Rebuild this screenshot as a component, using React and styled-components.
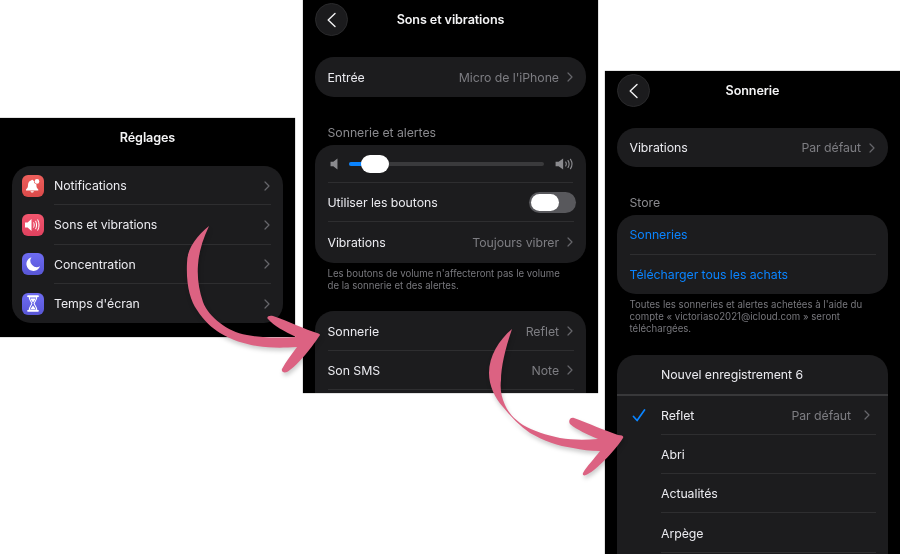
import React from 'react';
import styled, { createGlobalStyle } from 'styled-components';

const Global = createGlobalStyle`
    html, body {
        margin: 0;
        padding: 0;
        background: #fff;
    }
    body {
        font-family: Inter, "Noto Sans", "Liberation Sans", sans-serif;
    }
`;

const Canvas = styled.div`
    position: relative;
    width: 900px;
    height: 554px;
    overflow: hidden;
    background: #fff;
`;

// each screenshot sits freely on the white canvas
const Phone = styled.div`
    position: absolute;
    left: ${props => props.$x}px;
    top: ${props => props.$y}px;
    width: 295px;
    height: ${props => props.$h}px;
    box-sizing: border-box;
    padding: 3px 12px 0;
    overflow: hidden;
    background: #000;
    box-shadow: 0 0 1px #555;
    filter: blur(0.35px);
`;

const Header = styled.div`
    position: relative;
    display: flex;
    align-items: center;
    justify-content: center;
    height: 33px;
`;

const Title = styled.div`
    color: #f4f4f5;
    font-size: 12.6px;
    font-weight: 600;
    letter-spacing: -0.1px;
`;

const BackButton = styled.div`
    position: absolute;
    left: 0;
    top: 0;
    width: 33px;
    height: 33px;
    box-sizing: border-box;
    display: flex;
    align-items: center;
    justify-content: center;
    border-radius: 50%;
    background: #1b1b1d;
    border: 1px solid #2a2a2c;
`;

const Card = styled.div`
    margin-top: ${props => props.$mt || 0}px;
    border-radius: 19px;
    background: #1c1c1e;
    overflow: hidden;
`;

const Row = styled.div`
    display: flex;
    flex: ${props => props.$grow ? 1 : 'none'};
    align-items: center;
    box-sizing: border-box;
    height: ${props => props.$h || 39.3}px;
    margin: 0 12px 0 ${props => props.$inset ?? 12.5}px;
    padding-right: ${props => props.$pr || 0}px;
    gap: ${props => props.$gap || 8}px;
    box-shadow: ${props => props.$last ? 'none' : 'inset 0 -1px 0 #2e2e30'};
`;

const MarkedRow = styled.div`
    position: relative;
    display: flex;
    align-items: center;
`;

const Thick = styled.div`
    height: 1.5px;
    background: #38383a;
`;

const Label = styled.div`
    flex: 1;
    color: ${props => props.$blue ? '#0a84ff' : '#ebebf0'};
    font-size: 12.3px;
    letter-spacing: -0.05px;
    white-space: nowrap;
`;

const Value = styled.div`
    color: #7d7d82;
    font-size: 12.3px;
    letter-spacing: -0.05px;
    white-space: nowrap;
`;

const SectionTitle = styled.div`
    margin: 28px 12.5px ${props => props.$mb}px;
    height: 16px;
    line-height: 16px;
    color: #8a8a8e;
    font-size: 12.3px;
    letter-spacing: -0.05px;
`;

const Note = styled.div`
    margin: 5px 12.5px 0;
    color: #77777c;
    font-size: 9.65px;
    line-height: 12.3px;
    white-space: nowrap;
`;

const IconBox = styled.div`
    flex: none;
    width: 22px;
    height: 22px;
    border-radius: 6px;
    display: flex;
    align-items: center;
    justify-content: center;
    background: ${props => props.$bg};
`;

const MenuRow = styled.div`
    display: flex;
    align-items: center;
    padding-left: 10px;
    gap: 10px;
`;

const Spacer = styled.div`
    height: 40px;
`;

const SliderRow = styled.div`
    display: flex;
    align-items: center;
    box-sizing: border-box;
    height: 37.5px;
    margin: 0 13px 0 12.5px;
    padding-left: 2px;
    gap: 11px;
    box-shadow: inset 0 -1px 0 #2e2e30;
`;

const Track = styled.div`
    position: relative;
    flex: 1;
    height: 4.5px;
    border-radius: 2px;
    background: #3a3a3c;
`;

const TrackFill = styled.div`
    width: 14px;
    height: 100%;
    border-radius: 2px 0 0 2px;
    background: #0a84ff;
`;

const Knob = styled.div`
    position: absolute;
    left: 12px;
    top: -7px;
    width: 28px;
    height: 18px;
    border-radius: 9px;
    background: #fff;
`;

const Toggle = styled.div`
    width: 47px;
    height: 21px;
    box-sizing: border-box;
    margin-right: -2px;
    padding: 2px;
    border-radius: 11px;
    background: #58585c;
`;

const ToggleKnob = styled.div`
    width: 28px;
    height: 17px;
    border-radius: 9px;
    background: #fff;
`;

const CheckSlot = styled.div`
    position: absolute;
    left: 15px;
    top: 13px;
    line-height: 0;
`;

const ArrowLayer = styled.svg`
    position: absolute;
    left: 0;
    top: 0;
    filter: drop-shadow(1px 3px 2px rgba(0, 0, 0, 0.2));
`;

const Chevron = () => (
    <svg width="6" height="10" viewBox="0 0 6 10" fill="none">
        <path d="M1 1l4 4-4 4" stroke="#66666b" strokeWidth="1.2" strokeLinecap="round" strokeLinejoin="round" />
    </svg>
);

const BackArrow = () => (
    <svg width="11" height="16" viewBox="0 0 11 16" fill="none">
        <path d="M9 1.500L2.200 8 9 14.500" stroke="#f2f2f4" strokeWidth="1.400" strokeLinecap="round" strokeLinejoin="round" />
    </svg>
);

const Check = () => (
    <svg width="14" height="13" viewBox="0 0 14 13" fill="none">
        <path d="M1.500 7.500l3.600 4L12.500 1" stroke="#0a84ff" strokeWidth="1.700" strokeLinecap="round" strokeLinejoin="round" />
    </svg>
);

const BellIcon = () => (
    <svg width="16" height="16" viewBox="0 0 16 16" fill="#fff">
        <path d="M7.200 1.800c.5 0 .9.3 1 .8.3.1.6.2.9.4-.4 1.600.6 3 2.200 3.200.1.3.1.6.1.9 0 2.300.6 3.400 1.900 4.400v.9H1v-.9c1.300-1 2-2.100 2-4.400 0-2.300 1.200-4 3.200-4.500.1-.5.5-.8 1-.8z" />
        <circle cx="12" cy="3.400" r="2.300" />
        <path d="M5.500 13.300h3.400c-.1.8-.8 1.300-1.700 1.300s-1.600-.5-1.700-1.300z" />
    </svg>
);

const SpeakerShape = ({ color }) => (
    <path d="M1 5.500h2.600L7.500 2v12L3.600 10.500H1z" fill={color} />
);

const Waves = ({ color }) => (
    <path d="M9.700 5.800c.7 1.400.7 3 0 4.400M11.700 4.200c1.200 2.400 1.200 5.200 0 7.600M13.800 2.800c1.700 3.300 1.700 7.100 0 10.400" stroke={color} strokeWidth="1" strokeLinecap="round" fill="none" />
);

const SoundIcon = () => (
    <svg width="18" height="16" viewBox="0 0 18 16">
        <SpeakerShape color="#fff" />
        <Waves color="#fff" />
    </svg>
);

const MoonIcon = () => (
    <svg width="16" height="16" viewBox="0 0 16 16" fill="#fff">
        <path d="M6.500 1.200A7 7 0 1 0 15 10.300 6.400 6.400 0 0 1 6.500 1.200z" />
    </svg>
);

const HourglassIcon = () => (
    <svg width="14" height="17" viewBox="0 0 14 17" fill="none">
        <path d="M2 1.200h10M2 15.800h10" stroke="#fff" strokeWidth="1.800" strokeLinecap="round" />
        <path d="M3.200 2h7.600c0 2.800-2.300 4.600-2.700 6.500.4 1.900 2.700 3.700 2.700 6.500H3.200c0-2.800 2.300-4.600 2.700-6.500C5.500 6.600 3.200 4.800 3.200 2z" stroke="#fff" strokeWidth="1.100" />
        <path d="M4.500 3.400h5C9 5 7.600 6.300 7 7.600 6.400 6.300 5 5 4.500 3.400zM7 10.600l2.600 3.400H4.400z" fill="#fff" />
    </svg>
);

const VolumeLow = () => (
    <svg width="8" height="12" viewBox="0.5 1.500 7.500 13" preserveAspectRatio="none">
        <SpeakerShape color="#8a8a8e" />
    </svg>
);

const VolumeHigh = () => (
    <svg width="18" height="12" viewBox="0.5 1.500 15.500 13" preserveAspectRatio="none">
        <SpeakerShape color="#8a8a8e" />
        <Waves color="#8a8a8e" />
    </svg>
);

const menu = [
    { label: 'Notifications', bg: 'linear-gradient(#ee5f5c, #db4a4a)', icon: <BellIcon /> },
    { label: 'Sons et vibrations', bg: 'linear-gradient(#f2566e, #e0415f)', icon: <SoundIcon /> },
    { label: 'Concentration', bg: 'linear-gradient(#6e6cf2, #5856d6)', icon: <MoonIcon /> },
    { label: "Temps d'écran", bg: 'linear-gradient(#6e6cf2, #5856d6)', icon: <HourglassIcon /> },
];

const tones = ['Abri', 'Actualités', 'Arpège'];

const Link = ({ label, value, last, h }) => (
    <Row $last={last} $h={h} $pr={1}>
        <Label>{label}</Label>
        {value && <Value>{value}</Value>}
        <Chevron />
    </Row>
);

const Settings = () => (
    <Phone $x={0} $y={118} $h={219}>
        <Header>
            <Title>Réglages</Title>
        </Header>
        <Card $mt={12}>
            {menu.map((item, index) => (
                <MenuRow key={`menu-${index}`}>
                    <IconBox $bg={item.bg}>{item.icon}</IconBox>
                    <Row $grow $inset={0} $pr={1} $last={index === menu.length - 1}>
                        <Label>{item.label}</Label>
                        <Chevron />
                    </Row>
                </MenuRow>
            ))}
        </Card>
    </Phone>
);

const Sounds = () => (
    <Phone $x={303} $y={0} $h={393}>
        <Header>
            <BackButton><BackArrow /></BackButton>
            <Title>Sons et vibrations</Title>
        </Header>
        <Card $mt={21}>
            <Link label="Entrée" value="Micro de l'iPhone" last h={40} />
        </Card>
        <SectionTitle $mb={4}>Sonnerie et alertes</SectionTitle>
        <Card>
            <SliderRow>
                <VolumeLow />
                <Track>
                    <TrackFill />
                    <Knob />
                </Track>
                <VolumeHigh />
            </SliderRow>
            <Row>
                <Label>Utiliser les boutons</Label>
                <Toggle><ToggleKnob /></Toggle>
            </Row>
            <Link label="Vibrations" value="Toujours vibrer" last h={41} />
        </Card>
        <Note>
            Les boutons de volume n'affecteront pas le volume<br />
            de la sonnerie et des alertes.
        </Note>
        <Card $mt={19}>
            <Link label="Sonnerie" value="Reflet" />
            <Link label="Son SMS" value="Note" />
            <Spacer />
        </Card>
    </Phone>
);

const Ringtone = () => (
    <Phone $x={605} $y={71} $h={483}>
        <Header>
            <BackButton><BackArrow /></BackButton>
            <Title>Sonnerie</Title>
        </Header>
        <Card $mt={21}>
            <Link label="Vibrations" value="Par défaut" last />
        </Card>
        <SectionTitle $mb={4}>Store</SectionTitle>
        <Card>
            <Row><Label $blue>Sonneries</Label></Row>
            <Row $last><Label $blue>Télécharger tous les achats</Label></Row>
        </Card>
        <Note>
            Toutes les sonneries et alertes achetées à l'aide du<br />
            compte « victoriaso2021@icloud.com » seront<br />
            téléchargées.
        </Note>
        <Card $mt={19}>
            <Row $inset={44} $last><Label>Nouvel enregistrement 6</Label></Row>
            <Thick />
            <MarkedRow>
                <CheckSlot><Check /></CheckSlot>
                <Row $grow $inset={44} $pr={6} $gap={13}>
                    <Label>Reflet</Label>
                    <Value>Par défaut</Value>
                    <Chevron />
                </Row>
            </MarkedRow>
            {tones.map(name => (
                <Row $inset={44} key={name}><Label>{name}</Label></Row>
            ))}
            <Spacer />
        </Card>
    </Phone>
);

const Arrows = () => (
    <ArrowLayer width="900" height="554" viewBox="0 0 900 554">
        <path
            fill="#dc6282"
            d="M209 226C197 236 187 248 187 263C186 285 190 300 197 310C204 321 212 328 220 333C232 340 244 344 257 346C270 348 282 348 297 347C292 354 286 361 282 369C281 372 284 373 287 372C296 367 310 350 320 335C320 334 318 333 317 333C306 330 288 321 273 316C269 315 266 317 268 319C274 326 284 331 296 337C280 338 264 338 247 335C236 333 228 329 220 323C212 317 206 310 203 302C199 290 197 278 198 265C199 251 203 239 209 226Z"
        />
        <path
            fill="#dc6282"
            d="M512 329C499 340 489 356 489 373C489 386 495 398 503 407C511 417 520 426 530 433C544 441 558 446 573 448C582 450 590 451 600 451C594 459 587 466 583 473C582 476 585 476 588 474C596 470 614 452 623 438C624 436 622 435 618 435C606 431 588 423 574 418C570 417 568 421 570 424C577 430 587 434 598 439C585 440 572 440 560 438C546 435 534 431 523 425C514 419 508 412 505 405C501 396 500 388 501 380C501 368 505 349 512 329Z"
        />
    </ArrowLayer>
);

const App = () => (
    <Canvas>
        <Global />
        <Settings />
        <Sounds />
        <Ringtone />
        <Arrows />
    </Canvas>
);

export default App;
